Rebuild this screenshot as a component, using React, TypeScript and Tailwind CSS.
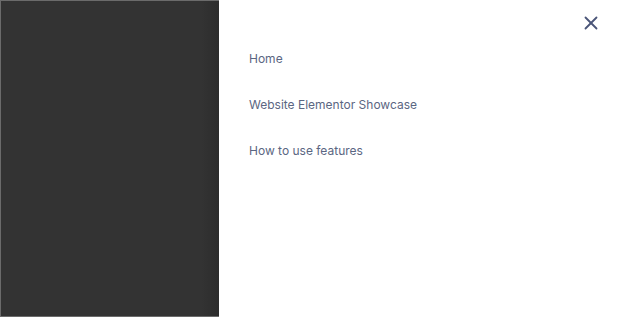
import { X } from 'lucide-react'

const links = ['Home', 'Website Elementor Showcase', 'How to use features']

export default function App() {
  return (
    <div className="flex h-[317px] w-[618px] overflow-hidden bg-white font-['Inter',sans-serif]">
      {/* backdrop */}
      <div className="h-full w-[219px] border-l border-t border-b border-[#6b6b6b] bg-[linear-gradient(to_right,#333333_92%,#2c2c2c)]" />

      {/* drawer */}
      <div className="flex h-full flex-1 flex-col bg-white">
        <div className="flex justify-end pr-[16px] pt-[12px]">
          <button className="flex h-[22px] w-[22px] items-center justify-center text-[#4a5578]">
            <X size={22} strokeWidth={2} />
          </button>
        </div>
        <nav className="flex flex-col gap-[28px] pl-[30px] pt-[16px]">
          {links.map((l) => (
            <a key={l} href="#" className="text-[12px] leading-[18px] text-[#5b6682]">
              {l}
            </a>
          ))}
        </nav>
      </div>
    </div>
  )
}
